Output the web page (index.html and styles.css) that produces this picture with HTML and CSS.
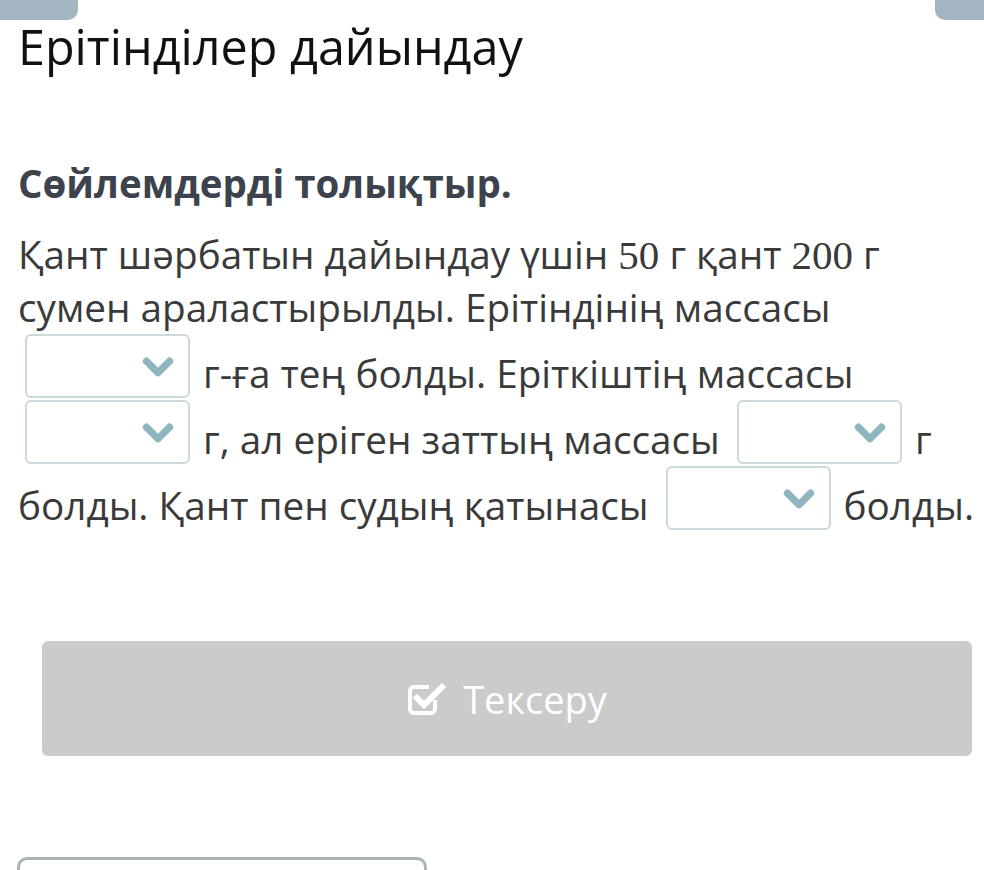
FILE: index.html
```html
<!DOCTYPE html>
<html lang="kk">
<head>
    <meta charset="UTF-8">
    <meta name="viewport" content="width=device-width, initial-scale=1.0">
    <title>Ерітінділер дайындау</title>
    <link rel="stylesheet" href="styles.css">
</head>
<body>
    <div class="top-bar">
        <span class="tab tab-left"></span>
        <span class="tab tab-right"></span>
    </div>

    <div class="content">
        <h1 class="title">Ерітінділер дайындау</h1>

        <h2 class="subtitle">Сөйлемдерді толықтыр.</h2>

        <p class="task">
            Қант шәрбатын дайындау үшін <span class="num">50</span> г қант <span class="num">200</span> г
            сумен араластырылды. Ерітіндінің массасы
            <span class="dropdown"><svg class="chevron" viewBox="0 0 32 22"><polyline points="5,5 16,16 27,5"/></svg></span>
            г-ға тең болды. Еріткіштің массасы
            <span class="dropdown"><svg class="chevron" viewBox="0 0 32 22"><polyline points="5,5 16,16 27,5"/></svg></span>
            г, ал еріген заттың массасы
            <span class="dropdown"><svg class="chevron" viewBox="0 0 32 22"><polyline points="5,5 16,16 27,5"/></svg></span>
            г болды. Қант пен судың қатынасы
            <span class="dropdown"><svg class="chevron" viewBox="0 0 32 22"><polyline points="5,5 16,16 27,5"/></svg></span>
            болды.
        </p>
    </div>

    <button class="check-btn" type="button">
        <svg class="check-icon" viewBox="0 0 40 36">
            <path class="box" d="M28 19v9a4 4 0 0 1-4 4H7a4 4 0 0 1-4-4V10a4 4 0 0 1 4-4h15"/>
            <polyline class="tick" points="10,17 17,24 35,6"/>
        </svg>
        <span>Тексеру</span>
    </button>

    <div class="next-box"></div>
</body>
</html>
```

FILE: styles.css
```css
/* Page */
body {
    margin: 0;
    font-family: "Open Sans", "Noto Sans", sans-serif;
    background: #ffffff;
    color: #3a3a3a;
    overflow: hidden;
}

.top-bar {
    display: flex;
    justify-content: space-between;
    height: 20px;
}

.tab {
    display: block;
    height: 20px;
    background: #a2b5c1;
}

.tab-left {
    width: 78px;
    border-radius: 0 0 10px 0;
}

.tab-right {
    width: 49px;
    border-radius: 0 0 0 10px;
}

.content {
    padding: 0 6px 0 18px;
}

.title {
    margin: 0;
    font-size: 48.5px;
    font-weight: 400;
    line-height: 52px;
    color: #111111;
}

.subtitle {
    margin: 87px 0 0;
    font-size: 38.5px;
    font-weight: 700;
    line-height: 48px;
    color: #3d434d;
}

.task {
    margin: 21px 0 0;
    font-size: 38.7px;
    line-height: 52px;
}

.num {
    font-family: "Liberation Serif", "DejaVu Serif", serif;
    font-size: 41px;
}

/* Inline select */
.dropdown {
    display: inline-block;
    position: relative;
    box-sizing: border-box;
    width: 165px;
    height: 64px;
    margin: 1px 3px 1px 7px;
    vertical-align: -11px;
    border: 2px solid #cbd8dc;
    border-radius: 6px;
    background: #ffffff;
}

.chevron {
    position: absolute;
    right: 13px;
    top: 20px;
    width: 34px;
    height: 23px;
}

.chevron polyline {
    fill: none;
    stroke: #8fb6bf;
    stroke-width: 7;
    stroke-linecap: round;
    stroke-linejoin: round;
}

/* Check button */
.check-btn {
    display: flex;
    align-items: center;
    justify-content: center;
    gap: 16px;
    box-sizing: border-box;
    width: 930px;
    height: 115px;
    margin: 110px 0 0 42px;
    padding: 0;
    border: none;
    border-radius: 6px;
    background: #cbcbcb;
    color: #ffffff;
    font-family: "Open Sans", "Noto Sans", sans-serif;
    font-size: 38px;
}

.check-icon {
    width: 40px;
    height: 36px;
}

.check-icon .box {
    fill: none;
    stroke: #ffffff;
    stroke-width: 4;
}

.check-icon .tick {
    fill: none;
    stroke: #ffffff;
    stroke-width: 6;
    stroke-linecap: square;
}

.next-box {
    box-sizing: border-box;
    width: 410px;
    height: 60px;
    margin: 101px 0 0 17px;
    border: 3px solid #abb4b6;
    border-radius: 10px;
}
```
